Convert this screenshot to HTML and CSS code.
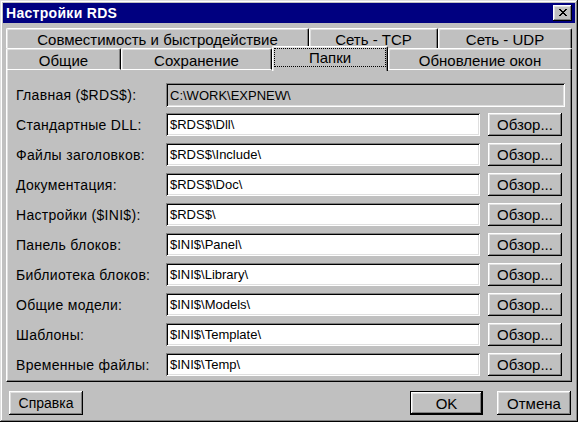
FILE: index.html
```html
<!DOCTYPE html>
<html lang="ru">
<head>
<meta charset="utf-8">
<link rel="stylesheet" href="styles.css">
</head>
<body>
<div class="window">
  <div class="titlebar">
    <span class="title">Настройки RDS</span>
    <button class="close" aria-label="Закрыть">
      <svg width="8" height="7" viewBox="0 0 8 7"><path d="M0 0h2v1h1v1h2V1h1V0h2v1H7v1H6v1H5v1h1v1h1v1h1v1H6V6H5V5H3v1H2v1H0V6h1V5h1V4h1V3H2V2H1V1H0z" fill="#000"/></svg>
    </button>
  </div>

  <div class="tabs">
    <div class="tabrow back">
      <div class="tab w303">Совместимость и быстродействие</div>
      <div class="tab w129">Сеть - TCP</div>
      <div class="tab w134">Сеть - UDP</div>
    </div>
    <div class="tabrow front">
      <div class="tab w115">Общие</div>
      <div class="tab w151">Сохранение</div>
      <div class="tab w116 active"><span class="focus">Папки</span></div>
      <div class="tab w184">Обновление окон</div>
    </div>
  </div>

  <div class="panel">
    <div class="row first">
      <span class="label">Главная ($RDS$):</span>
      <div class="field disabled wide">C:\WORK\EXPNEW\</div>
    </div>
    <div class="row">
      <span class="label">Стандартные DLL:</span>
      <div class="field">$RDS$\Dll\</div>
      <button class="btn browse">Обзор...</button>
    </div>
    <div class="row">
      <span class="label">Файлы заголовков:</span>
      <div class="field">$RDS$\Include\</div>
      <button class="btn browse">Обзор...</button>
    </div>
    <div class="row">
      <span class="label">Документация:</span>
      <div class="field">$RDS$\Doc\</div>
      <button class="btn browse">Обзор...</button>
    </div>
    <div class="row">
      <span class="label">Настройки ($INI$):</span>
      <div class="field">$RDS$\</div>
      <button class="btn browse">Обзор...</button>
    </div>
    <div class="row">
      <span class="label">Панель блоков:</span>
      <div class="field">$INI$\Panel\</div>
      <button class="btn browse">Обзор...</button>
    </div>
    <div class="row">
      <span class="label">Библиотека блоков:</span>
      <div class="field">$INI$\Library\</div>
      <button class="btn browse">Обзор...</button>
    </div>
    <div class="row">
      <span class="label">Общие модели:</span>
      <div class="field">$INI$\Models\</div>
      <button class="btn browse">Обзор...</button>
    </div>
    <div class="row">
      <span class="label">Шаблоны:</span>
      <div class="field">$INI$\Template\</div>
      <button class="btn browse">Обзор...</button>
    </div>
    <div class="row">
      <span class="label">Временные файлы:</span>
      <div class="field">$INI$\Temp\</div>
      <button class="btn browse">Обзор...</button>
    </div>
  </div>

  <div class="footer">
    <button class="btn help">Справка</button>
    <div class="spacer"></div>
    <button class="btn ok default">OK</button>
    <button class="btn cancel">Отмена</button>
  </div>
</div>
</body>
</html>
```

FILE: styles.css
```css
* { box-sizing: border-box; }
html, body { margin: 0; padding: 0; background: #c0c0c0; }
body {
  font-family: "Liberation Sans", Arial, sans-serif;
  font-size: 13px;
  color: #000;
  -webkit-font-smoothing: none;
}
.window {
  width: 578px;
  height: 422px;
  background: #c0c0c0;
  padding: 3px;
  box-shadow: inset -1px -1px #000, inset 1px 1px #dfdfdf, inset -2px -2px #808080, inset 2px 2px #fff;
  display: flex;
  flex-direction: column;
}
.titlebar {
  height: 20px;
  background: #000080;
  display: flex;
  align-items: center;
  justify-content: space-between;
  padding: 0 3px 0 3px;
}
.title {
  color: #fff;
  font-weight: bold;
  font-size: 14px;
  letter-spacing: 0.3px;
}
.close {
  width: 19px;
  height: 16px;
  padding: 0 0 1px 0;
  margin: 0;
  border: 0;
  background: #c0c0c0;
  box-shadow: inset -1px -1px #000, inset 1px 1px #fff, inset -2px -2px #808080, inset 2px 2px #dfdfdf;
  display: flex;
  align-items: center;
  justify-content: center;
}
.close svg { display: block; }

.tabs {
  margin: 5px 3px 0 3px;
  display: flex;
  flex-direction: column;
  font-size: 15px;
}
.tabrow { display: flex; position: relative; }
.tabrow.back { height: 20px; }
.tabrow.front { height: 22px; }
.tab {
  background: #c0c0c0;
  border-top: 1px solid #fff;
  border-left: 1px solid #fff;
  border-right: 1px solid #000;
  box-shadow: inset -1px 0 #808080, inset 1px 1px #dfdfdf;
  border-radius: 2px 2px 0 0;
  display: flex;
  align-items: center;
  justify-content: center;
  padding-top: 2px;
  height: 100%;
}
.front .tab { border-bottom: 1px solid #fff; }
.front .tab.active {
  border-bottom: none;
  height: 25px;
  margin-top: -2px;
  position: relative;
  z-index: 2;
  align-items: flex-start;
  padding-top: 1px;
}
.focus {
  outline: 1px dotted #000;
  outline-offset: 0;
  padding: 0 34px;
  line-height: 17px;
  margin-top: 1px;
}
.w303 { width: 303px; }
.w129 { width: 129px; }
.w134 { width: 134px; }
.w115 { width: 115px; }
.w151 { width: 151px; }
.w116 { width: 116px; }
.w184 { width: 184px; }

.panel {
  margin: 0 3px;
  height: 312px;
  border-left: 1px solid #fff;
  border-top: 0;
  border-right: 1px solid #000;
  border-bottom: 1px solid #000;
  box-shadow: inset -1px -1px #808080, inset 1px 0 #dfdfdf;
  padding: 13px 9px 5px 9px;
  display: flex;
  flex-direction: column;
  gap: 7px;
}
.row {
  display: flex;
  align-items: center;
  height: 23px;
}
.row.first { height: 25px; margin-bottom: -1px; }
.label { width: 150px; flex: none; font-size: 14px; letter-spacing: 0.3px; }
.field {
  flex: 1;
  height: 100%;
  background: #fff;
  box-shadow: inset 1px 1px #808080, inset -1px -1px #fff, inset 2px 2px #000, inset -2px -2px #dfdfdf;
  padding: 0 4px;
  display: flex;
  align-items: center;
  white-space: nowrap;
}
.field.disabled {
  background: #c0c0c0;
  margin-right: -3px;
}
.btn {
  font-family: inherit;
  font-size: 15px;
  color: #000;
  background: #c0c0c0;
  border: 0;
  margin: 0;
  padding: 0;
  box-shadow: inset -1px -1px #000, inset 1px 1px #fff, inset -2px -2px #808080, inset 2px 2px #dfdfdf;
  display: flex;
  align-items: center;
  justify-content: center;
}
.browse {
  width: 74px;
  height: 23px;
  margin-left: 8px;
  flex: none;
}
.footer {
  display: flex;
  align-items: center;
  padding: 9px 4px 0 6px;
}
.spacer { flex: 1; }
.help { width: 74px; height: 24px; font-size: 14px; }
.ok { width: 73px; height: 24px; margin-right: 14px; }
.ok.default {
  box-shadow: inset -1px -1px #000, inset 1px 1px #000, inset -2px -2px #000, inset 2px 2px #fff, inset -3px -3px #808080, inset 3px 3px #dfdfdf;
}
.cancel { width: 74px; height: 24px; }
```
